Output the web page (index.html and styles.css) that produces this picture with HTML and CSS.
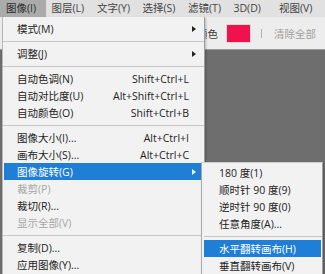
FILE: index.html
```html
<!DOCTYPE html>
<html lang="zh-CN">
<head>
  <meta charset="UTF-8">
  <meta name="viewport" content="width=device-width, initial-scale=1.0">
  <title>图像旋转</title>
  <link rel="stylesheet" href="styles.css">
</head>
<body>
  <div class="app">
    <div class="menubar">
      <span class="menubar-item active">图像(I)</span>
      <span class="menubar-item">图层(L)</span>
      <span class="menubar-item">文字(Y)</span>
      <span class="menubar-item">选择(S)</span>
      <span class="menubar-item">滤镜(T)</span>
      <span class="menubar-item">3D(D)</span>
      <span class="menubar-item">视图(V)</span>
    </div>

    <div class="optionsbar">
      <span class="opt-label">颜色</span>
      <span class="swatch"></span>
      <span class="opt-divider"></span>
      <span class="opt-button">清除全部</span>
    </div>

    <div class="canvas"></div>

    <div class="menu">
      <div class="item"><span>模式(M)</span><span class="arrow"></span></div>
      <div class="sep"></div>
      <div class="item"><span>调整(J)</span><span class="arrow"></span></div>
      <div class="sep"></div>
      <div class="item"><span>自动色调(N)</span><span class="key">Shift+Ctrl+L</span></div>
      <div class="item"><span>自动对比度(U)</span><span class="key">Alt+Shift+Ctrl+L</span></div>
      <div class="item"><span>自动颜色(O)</span><span class="key">Shift+Ctrl+B</span></div>
      <div class="sep"></div>
      <div class="item"><span>图像大小(I)...</span><span class="key">Alt+Ctrl+I</span></div>
      <div class="item"><span>画布大小(S)...</span><span class="key">Alt+Ctrl+C</span></div>
      <div class="item selected"><span>图像旋转(G)</span><span class="arrow"></span></div>
      <div class="item disabled"><span>裁剪(P)</span></div>
      <div class="item"><span>裁切(R)...</span></div>
      <div class="item disabled"><span>显示全部(V)</span></div>
      <div class="sep"></div>
      <div class="item"><span>复制(D)...</span></div>
      <div class="item"><span>应用图像(Y)...</span></div>
    </div>

    <div class="menu submenu">
      <div class="item"><span>180 度(1)</span></div>
      <div class="item"><span>顺时针 90 度(9)</span></div>
      <div class="item"><span>逆时针 90 度(0)</span></div>
      <div class="item"><span>任意角度(A)...</span></div>
      <div class="sep"></div>
      <div class="item selected"><span>水平翻转画布(H)</span></div>
      <div class="item"><span>垂直翻转画布(V)</span></div>
    </div>
  </div>
</body>
</html>
```

FILE: styles.css
```css
body {
  margin: 0;
  font-family: "Open Sans", "Noto Sans CJK SC", sans-serif;
  font-size: 10.5px;
  color: #222;
}
.app {
  position: relative;
  width: 325px;
  height: 274px;
  overflow: hidden;
  display: flex;
  flex-direction: column;
  background: #6e6e6e;
}

/* top menu bar */
.menubar {
  display: flex;
  height: 17px;
  background: #e1e1e1;
  color: #444;
}
.menubar-item {
  width: 45.5px;
  padding-left: 6px;
  box-sizing: border-box;
  line-height: 17px;
  white-space: nowrap;
}
.menubar-item.active {
  background: #ababab;
  color: #2a2a2a;
}

/* tool options */
.optionsbar {
  display: flex;
  align-items: center;
  height: 32px;
  padding-left: 197px;
  background: #ededed;
  border-bottom: 1px solid #9a9a9a;
  color: #3a3a3a;
}
.swatch {
  width: 23px;
  height: 17px;
  margin-left: 8px;
  background: #f0124e;
  border: 1px solid #d9d9d9;
}
.opt-divider {
  width: 1px;
  height: 9px;
  margin: 0 12px 0 10px;
  background: #b0b0b0;
}
.opt-button {
  color: #a0a0a0;
}
.canvas {
  flex: 1;
  background: #6e6e6e;
}

/* dropdown menus */
.menu {
  position: absolute;
  top: 17px;
  left: 2px;
  width: 201px;
  padding: 3px 0 3px;
  background: #f2f2f2;
  border-left: 1px solid #b9b9b9;
  border-right: 1px solid #9f9f9f;
  box-shadow: 1px 1px 2px rgba(0, 0, 0, 0.25);
}
.menu .item {
  display: flex;
  justify-content: space-between;
  align-items: center;
  height: 17px;
  padding: 0 13px 0 13px;
  margin: 0 1px;
  white-space: nowrap;
}
.menu .key {
  margin-right: 1px;
}
.menu .arrow {
  width: 0;
  height: 0;
  margin-right: -6px;
  border-top: 3px solid transparent;
  border-bottom: 3px solid transparent;
  border-left: 4px solid #222;
}
.menu .item.selected {
  background: #1f7fd7;
  color: #fff;
}
.menu .item.selected .arrow {
  border-left-color: #e8f2fc;
}
.menu .item.disabled {
  color: #a6a6a6;
}
.menu .sep {
  height: 1px;
  margin: 4px 0 3px;
  background: #c6c6c6;
}

.submenu {
  top: 162px;
  left: 201px;
  width: 120px;
  padding: 1px 0 3px;
  border-left: 1px solid #a9a9a9;
  border-top: 1px solid #d0d0d0;
}
.submenu .item {
  padding-left: 15px;
  margin: 0 1px 0 2px;
}
.submenu .sep {
  margin: 4px 0 3px 2px;
}
```
